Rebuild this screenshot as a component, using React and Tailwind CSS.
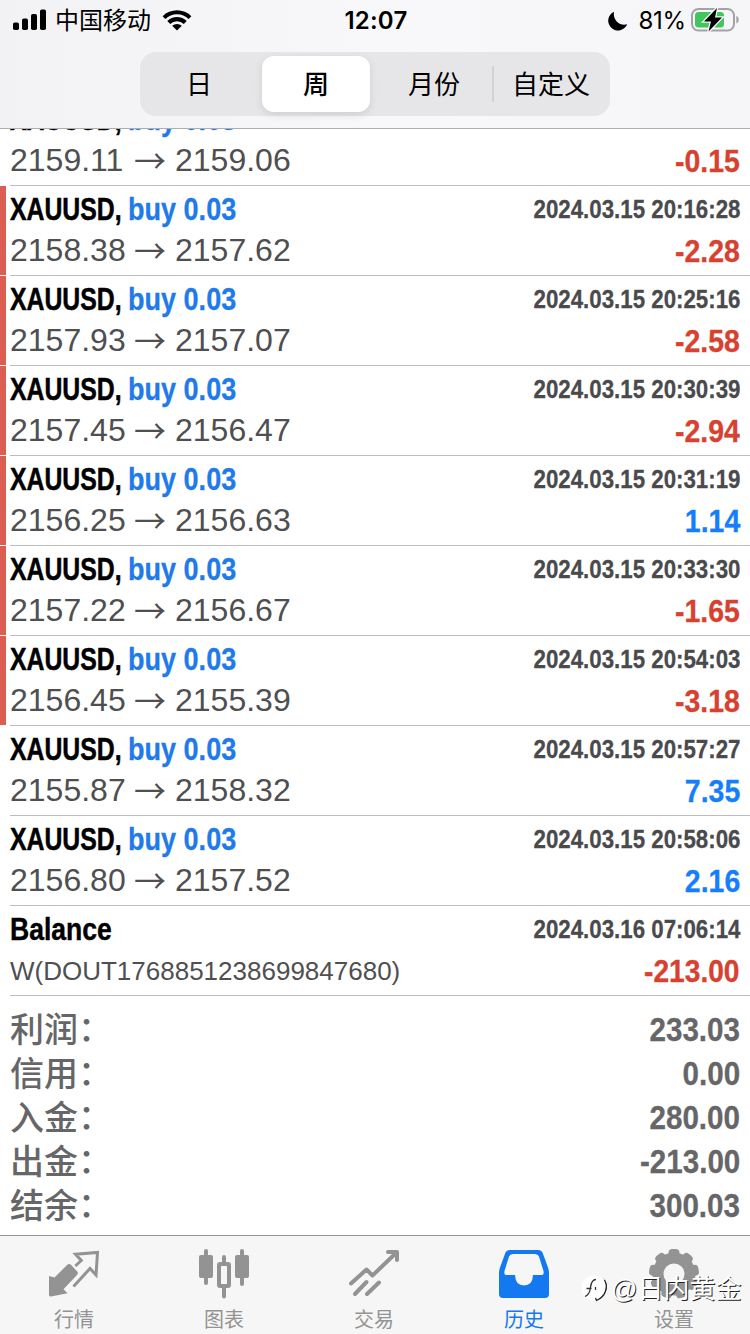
import clsx from 'clsx'

const deals = [
    { open: '2159.11', close: '2159.06', time: '2024.03.15 20:13:43', profit: '-0.15', marked: false },
    { open: '2158.38', close: '2157.62', time: '2024.03.15 20:16:28', profit: '-2.28', marked: true },
    { open: '2157.93', close: '2157.07', time: '2024.03.15 20:25:16', profit: '-2.58', marked: true },
    { open: '2157.45', close: '2156.47', time: '2024.03.15 20:30:39', profit: '-2.94', marked: true },
    { open: '2156.25', close: '2156.63', time: '2024.03.15 20:31:19', profit: '1.14', marked: true },
    { open: '2157.22', close: '2156.67', time: '2024.03.15 20:33:30', profit: '-1.65', marked: true },
    { open: '2156.45', close: '2155.39', time: '2024.03.15 20:54:03', profit: '-3.18', marked: true },
    { open: '2155.87', close: '2158.32', time: '2024.03.15 20:57:27', profit: '7.35', marked: false },
    { open: '2156.80', close: '2157.52', time: '2024.03.15 20:58:06', profit: '2.16', marked: false },
]

const summary = [
    { label: '利润', value: '233.03' },
    { label: '信用', value: '0.00' },
    { label: '入金', value: '280.00' },
    { label: '出金', value: '-213.00' },
    { label: '结余', value: '300.03' },
]

const StatusBar = () => (
    <div className="flex h-10 items-center justify-between pl-[13px] pr-[11px] font-['Inter','Noto_Sans_CJK_SC',sans-serif] text-black">
        <div className="flex w-[300px] items-center">
            <svg width="33" height="22" viewBox="0 0 33 22">
                <rect x="0" y="13.5" width="6" height="7.5" rx="1.8" />
                <rect x="9" y="9.5" width="6" height="11.5" rx="1.8" />
                <rect x="18" y="5" width="6" height="16" rx="1.8" />
                <rect x="27" y="0.5" width="6" height="20.5" rx="1.8" />
            </svg>
            <span className="ml-[9px] pt-[2px] text-[24px] leading-none">中国移动</span>
            <svg className="ml-[11px]" width="30" height="22" viewBox="0 0 30 22">
                <path d="M0.6 7.2a20.6 20.6 0 0 1 28.8 0l-2.8 2.9a16.6 16.6 0 0 0-23.2 0z" />
                <path d="M5.3 12a14 14 0 0 1 19.4 0l-2.9 2.9a9.9 9.9 0 0 0-13.6 0z" />
                <path d="M10.2 16.8a7.2 7.2 0 0 1 9.6 0L15 21.6z" />
            </svg>
        </div>
        <span className="pt-[2px] text-[24px] font-semibold leading-none tracking-[0.2px]">12:07</span>
        <div className="flex w-[300px] items-center justify-end">
            <svg className="mt-[2px]" width="20" height="20" viewBox="0 0 20 20">
                <path d="M6 0.8A9.8 9.8 0 1 0 19.2 13.2C12 15.5 4.5 9 6 0.8z" />
            </svg>
            <span className="ml-[10px] pt-[2px] text-[24px] leading-none tracking-[-0.2px]">81%</span>
            <svg className="ml-[5px]" width="48" height="26" viewBox="0 0 48 26">
                <rect x="1" y="2" width="42" height="21.5" rx="6.5" fill="none" stroke="#a3a3a7" strokeWidth="2" />
                <rect x="4" y="5" width="29" height="15.5" rx="3.5" fill="#41c65b" />
                <path d="M45.3 9v7.5c1.8-.6 2.4-2 2.4-3.7s-.6-3.2-2.4-3.8z" fill="#a3a3a7" />
                <path d="M26 1 13 14.5h7L17.5 24.5 31 10.5h-7z" stroke="#f6f6f8" strokeWidth="2.6" paintOrder="stroke" />
            </svg>
        </div>
    </div>
)

const PeriodTabs = () => (
    <div className="mx-auto mt-3 flex h-16 w-[470px] items-center rounded-[16px] bg-[#e6e6e9] px-1 text-[26px] leading-none text-black">
        <div className="w-[110px] pt-[2px] text-center">日</div>
        <div className="ml-2 flex h-14 w-[108px] items-center justify-center rounded-[12px] bg-white pt-[2px] font-medium shadow-[0_3px_8px_rgba(0,0,0,0.1)]">周</div>
        <div className="w-[122px] pl-[6px] pt-[2px] text-center">月份</div>
        <div className="h-9 w-[2px] bg-[#d2d2d6]" />
        <div className="flex-1 pl-[2px] pt-[2px] text-center">自定义</div>
    </div>
)

const DealRow = ({ deal }) => (
    <div className="flex h-[90px] shrink-0">
        <div className={clsx('mb-px w-[6px]', deal.marked && 'bg-[#dc5d52]')} />
        <div className="ml-1 flex-1 border-b border-[#bcbcbe] pr-[10px] pt-[2px]">
            <div className="flex h-[42px] items-center justify-between text-[32px] font-bold leading-none">
                <div className="flex whitespace-nowrap">
                    <span className="w-[118px] origin-left scale-x-[0.775] text-black [-webkit-text-stroke:0.5px_currentColor]">XAUUSD,</span>
                    <span className="w-[108px] origin-left scale-x-[0.845] text-[#1f7aea] [-webkit-text-stroke:0.3px_currentColor]">buy 0.03</span>
                </div>
                <span className="origin-right scale-x-[0.857] text-[26px] text-[#4a4a4d] [-webkit-text-stroke:0.3px_currentColor]">{deal.time}</span>
            </div>
            <div className="flex h-[42px] items-center justify-between text-[32px] leading-none text-[#4f4f52]">
                <div className="flex items-center pb-[2px]">
                    <span className="w-[124px]">{deal.open}</span>
                    <span className="w-[41px] pb-[3px] font-['Noto_Sans_CJK_SC',sans-serif]">→</span>
                    <span>{deal.close}</span>
                </div>
                <span
                    className={clsx(
                        'origin-right scale-x-[0.89] font-bold [-webkit-text-stroke:0.3px_currentColor]',
                        deal.profit.startsWith('-') ? 'text-[#d8412f]' : 'text-[#157efb]'
                    )}
                >
                    {deal.profit}
                </span>
            </div>
        </div>
    </div>
)

const BalanceRow = () => (
    <div className="ml-[10px] h-[90px] shrink-0 border-b border-[#bcbcbe] pr-[10px] pt-[2px]">
        <div className="flex h-[42px] items-center justify-between font-bold leading-none">
            <span className="origin-left scale-x-[0.83] text-[32px] text-black [-webkit-text-stroke:0.4px_currentColor]">Balance</span>
            <span className="origin-right scale-x-[0.857] text-[26px] text-[#4a4a4d] [-webkit-text-stroke:0.3px_currentColor]">2024.03.16 07:06:14</span>
        </div>
        <div className="flex h-[42px] items-center justify-between leading-none">
            <span className="text-[26px] text-[#4f4f52]">W(DOUT1768851238699847680)</span>
            <span className="origin-right scale-x-[0.88] text-[32px] font-bold text-[#d8412f] [-webkit-text-stroke:0.3px_currentColor]">-213.00</span>
        </div>
    </div>
)

const QuotesIcon = () => (
    <svg width="50" height="50" viewBox="0 0 50 50" fill="#939393">
        <path d="M0 27 5.5 28.5 18 16q2.200-1.800 4.200 0l6 6.500q1.300 1.700 0 3.300L14.500 40.300l4 4L2 47.500Q0 47.500 0 46z" />
        <path d="M26.3 17 32.3 11.5 26.5 5.3 48.5 3.5 47 26 41 19.5 24.5 37.5" fill="none" stroke="#939393" strokeWidth="3" />
    </svg>
)

const ChartIcon = () => (
    <svg width="50" height="50" viewBox="0 0 50 50" fill="#939393">
        <rect x="0" y="6" width="14" height="23" rx="2" />
        <rect x="5" y="0" width="4" height="36" rx="2" />
        <rect x="36" y="6" width="14" height="23" rx="2" />
        <rect x="41" y="0" width="4" height="37" rx="2" />
        <rect x="20" y="15" width="10" height="22" rx="1" fill="none" stroke="#939393" strokeWidth="4" />
        <path d="M25 8v7M25 38v9.5" stroke="#939393" strokeWidth="4" strokeLinecap="round" />
    </svg>
)

const TradeIcon = () => (
    <svg width="50" height="50" viewBox="0 0 50 50" fill="none" stroke="#939393" strokeWidth="4" strokeLinecap="round" strokeLinejoin="round">
        <path d="M2 34.5 17.5 20.5 23.5 26.5 47 4M39 3h9v8" />
        <path d="M6 45 17.5 33M18 45 30 33.5" />
    </svg>
)

const HistoryIcon = () => (
    <svg width="50" height="50" viewBox="0 0 50 50">
        <path
            fill="#1478f0"
            fillRule="evenodd"
            d="M11 1h28q3.500 0 4.700 3L49 18.500q1 3 1 6V45q0 4-4 4H4q-4 0-4-4V24.500q0-3 1-6L6.300 4Q7.500 1 11 1zM14 5q-3 0-4 2.500L5.500 22q-.8 4 1.500 4h9q.5 10.500 9 10.500T34 26h9q2.300 0 1.500-4L40 7.500Q39 5 36 5z"
        />
    </svg>
)

const SettingsIcon = () => (
    <svg width="50" height="50" viewBox="0 0 50 50">
        <g fill="#939393">
            <circle cx="25" cy="25" r="21.5" />
            {[0, 40, 80, 120, 160, 200, 240, 280, 320].map((angle) => (
                <rect key={angle} x="19.5" y="0" width="11" height="20" rx="4" transform={`rotate(${angle} 25 25)`} />
            ))}
        </g>
        <circle cx="25" cy="25" r="10.5" fill="#f6f6f6" />
    </svg>
)

const tabs = [
    { label: '行情', Icon: QuotesIcon },
    { label: '图表', Icon: ChartIcon },
    { label: '交易', Icon: TradeIcon },
    { label: '历史', Icon: HistoryIcon, active: true },
    { label: '设置', Icon: SettingsIcon },
]

const Watermark = () => (
    <div className="absolute left-[581px] top-[35px] flex items-center text-white">
        <svg width="30" height="34" viewBox="0 0 30 34">
            <circle cx="13" cy="17" r="12.5" fill="white" />
            <path d="M22 8c5 6 4 15-6 20" fill="none" stroke="#222" strokeWidth="1.5" />
            <path d="M20 7c3 8 1 15-6 20l1 3c10-5 13-15 8-22z" fill="white" />
            <path d="M23.5 9c4 7 1 17-8 20.5l-1-2.5" fill="none" stroke="#222" strokeWidth="1.3" />
            <path d="M15 8.5c-4 0-5 4-5.5 8S8 24 4 25.5M5.5 17.5h5M14.5 16v3" fill="none" stroke="#333" strokeWidth="1.3" />
        </svg>
        <span className="whitespace-nowrap pt-px text-[26px] leading-none [text-shadow:1px_1px_0_#222]">@日内黄金</span>
    </div>
)

const App = () => {
    return (
        <div className="flex h-[1334px] w-[750px] flex-col overflow-hidden bg-white font-['Liberation_Sans','Noto_Sans_CJK_SC',sans-serif]">
            {/* Header */}
            <header className="z-10 h-[129px] shrink-0 border-b border-[#aeaeb0] bg-gradient-to-r from-[#f2f2f4] via-[#f8f8fb] to-[#f6f6f8]">
                <StatusBar />
                <PeriodTabs />
            </header>

            {/* Deals, scrolled under the header */}
            <main className="flex min-h-0 flex-1 flex-col overflow-hidden">
                <div className="-mt-[33px] flex flex-col">
                    {deals.map((deal) => (
                        <DealRow key={deal.time} deal={deal} />
                    ))}
                    <BalanceRow />
                </div>
                <div className="pl-[10px] pr-[10px] pt-[11px]">
                    {summary.map(({ label, value }) => (
                        <div key={label} className="flex h-11 items-center justify-between text-[34px] leading-none text-[#666668]">
                            <span className="flex pt-[2px] font-medium">
                                {label}
                                <span className="-mt-px">：</span>
                            </span>
                            <span className="origin-right scale-x-[0.87] font-bold [-webkit-text-stroke:0.3px_currentColor]">{value}</span>
                        </div>
                    ))}
                </div>
            </main>

            {/* Tab bar */}
            <nav className="relative h-[99px] shrink-0 border-t border-[#949496] bg-[#f6f6f6]">
                <div className="-ml-px grid grid-cols-[repeat(5,150px)]">
                    {tabs.map(({ label, Icon, active }) => (
                        <div key={label} className="flex flex-col items-center pt-[13px]">
                            <Icon />
                            <span className={clsx('mt-[11px] text-[20px] leading-none', active ? 'text-[#1478f0]' : 'text-[#939393]')}>
                                {label}
                            </span>
                        </div>
                    ))}
                </div>
                <Watermark />
            </nav>
        </div>
    )
}

export default App
